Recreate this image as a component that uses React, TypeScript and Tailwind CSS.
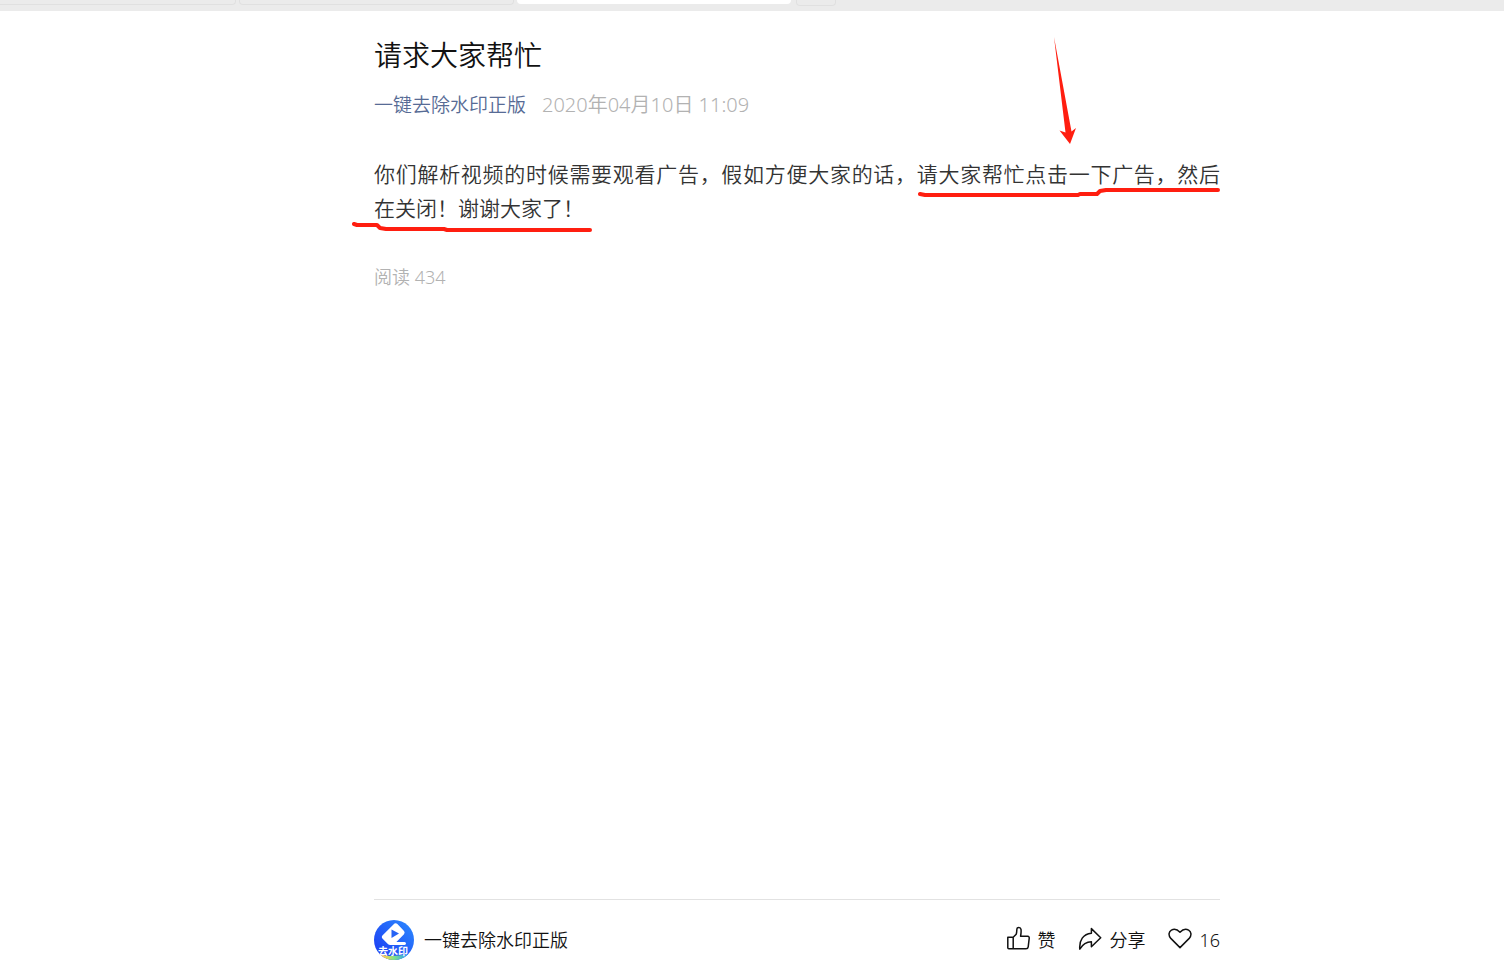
import type { ReactNode } from "react";

export default function App() {
  return (
    <div className="min-h-screen flex flex-col bg-white overflow-hidden font-['Noto_Sans','Noto_Sans_CJK_SC',sans-serif] font-[350]">
      <TabStrip />

      <div className="flex-1 flex flex-col w-full pl-[90px]">
        <div className="flex-1 flex flex-col w-full max-w-[846px] mx-auto">
          <main className="relative flex-1 pt-6">
            <h1 className="text-[28px] leading-10 text-[#111111]">请求大家帮忙</h1>

            <div className="flex items-center gap-4 mt-4 text-[19px] leading-7">
              <a href="#" className="text-[#576b95]">一键去除水印正版</a>
              <time className="text-[20px] text-[#b2b2b2]">2020年04月10日 11:09</time>
            </div>

            <p className="mt-[38px] text-[21px] leading-[34px] text-[#333333]">
              <span className="block text-justify [text-align-last:justify]">
                你们解析视频的时候需要观看广告，假如方便大家的话，请大家帮忙点击一下广告，然后
              </span>
              <span className="block">在关闭！谢谢大家了！</span>
            </p>

            <div className="mt-[38px] text-[18px] leading-7 text-[#b2b2b2]">阅读 434</div>

            <Marks />
          </main>

          <footer className="h-20 flex items-center justify-between border-t border-[#e2e2e2] text-[18px] text-[#111111]">
            <a href="#" className="flex items-center gap-[10px]">
              <Avatar />
              <span className="pt-0.5">一键去除水印正版</span>
            </a>
            <div className="flex items-center gap-[23px]">
              <Action label="赞">
                <path d="M1.8 11.2H7.2L10.2 8.2C10.8 6.8 10.8 4.8 10.9 3C11 1 14.6.7 15 3.4C15.3 5.8 15 8 14.6 10.2H21.6Q23.5 10.4 23.2 12.4L22.2 20.8Q21.9 22.8 20 22.8H2.8Q1.8 22.8 1.8 21.8ZM7.2 11.2V22.8" />
              </Action>
              <Action label="分享">
                <path d="M13.4 2.6L22.7 11.8L13.4 20.8V15.8C8 15.8 4.5 18.6 1.8 23.2C1 14.2 5.2 8 13.4 7.2Z" />
              </Action>
              <Action label="16">
                <path d="M12 21.6L2.8 12.4C0 9.4.8 5.6 3.4 4.1C6.2 2.5 9.2 3.2 12 6.3C14.8 3.2 17.8 2.5 20.6 4.1C23.2 5.6 24 9.4 21.2 12.4Z" />
              </Action>
            </div>
          </footer>
        </div>
      </div>
    </div>
  );
}

// bottom edge of the browser tabs
function TabStrip() {
  return (
    <header className="h-[11px] shrink-0 flex items-start bg-[#ebebeb]">
      <div className="w-[236px] h-[5px] border-b border-r border-[#e0e0e0] rounded-br-[4px]"></div>
      <div className="w-[275px] h-[5px] ml-[3px] border-b border-x border-[#e0e0e0] rounded-b-[4px]"></div>
      <div className="w-[274px] h-1 ml-[3px] bg-white rounded-b-[4px]"></div>
      <div className="w-10 h-1.5 ml-[5px] border-b border-x border-[#e0e0e0] rounded-b-[4px]"></div>
    </header>
  );
}

// hand drawn arrow and underlines over the article
function Marks() {
  return (
    <svg
      className="absolute top-0 -left-6 pointer-events-none"
      width="880"
      height="230"
      viewBox="350 11 880 230"
      fill="none"
      aria-hidden="true"
    >
      <path d="M1054 37L1071.5 131.5L1076 128L1070 144L1059.5 130.5L1065.5 132.5Z" fill="#ff1e10" />
      <g stroke="#ff1e10" strokeWidth="4" strokeLinecap="round" strokeLinejoin="round">
        <path d="M920 194L925 195H1078L1080 194H1097L1100 191L1106 190H1218" />
        <path d="M354 224L357 225H377L380 228L386 229H444L447 230H590" />
      </g>
    </svg>
  );
}

type ActionProps = {
  label: string;
  children: ReactNode;
}

function Action({ label, children }: ActionProps) {
  return (
    <button type="button" className="flex items-center gap-[7px]">
      <svg
        className="w-6 h-6 -mt-1"
        viewBox="0 0 24 24"
        fill="none"
        stroke="#111111"
        strokeWidth="1.5"
        strokeLinejoin="round"
        aria-hidden="true"
      >
        {children}
      </svg>
      <span className="pt-0.5">{label}</span>
    </button>
  );
}

function Avatar() {
  return (
    <svg className="w-10 h-10" viewBox="0 0 40 40" aria-hidden="true">
      <defs>
        <linearGradient id="sky" x1="0" y1="1" x2="1" y2="0">
          <stop offset="0" stopColor="#1b35f2" />
          <stop offset="1" stopColor="#2c8cff" />
        </linearGradient>
        <linearGradient id="rainbow" x1="0" y1="0" x2="1" y2="0">
          <stop offset="0" stopColor="#ff4f7a" />
          <stop offset="0.3" stopColor="#ffd24a" />
          <stop offset="0.6" stopColor="#7be08a" />
          <stop offset="1" stopColor="#2494ff" />
        </linearGradient>
        <clipPath id="round">
          <circle cx="20" cy="20" r="20" />
        </clipPath>
      </defs>
      <g clipPath="url(#round)">
        <rect width="40" height="40" fill="url(#sky)" />
        <path d="M0 31C8 37 19 37 34 34V40H0Z" fill="url(#rainbow)" />
        <path
          d="M20.5 3.6Q22 2.6 23.4 4L30 11Q31.3 12.6 30 14.2L22.4 22H30.5Q32 22.2 32 23.5T30.5 25H16.5Q14.8 25 13.6 23.8L8.4 18.6Q7 17 8.4 15.4Z"
          fill="#ffffff"
        />
        <path d="M17.5 9.5L25 13.5L17.5 18Z" fill="#2563f5" />
        <text
          x="19"
          y="35"
          textAnchor="middle"
          fontSize="10"
          fontWeight="700"
          fill="#ffffff"
          className="font-['Noto_Sans_CJK_SC',sans-serif]"
        >
          去水印
        </text>
      </g>
    </svg>
  );
}
